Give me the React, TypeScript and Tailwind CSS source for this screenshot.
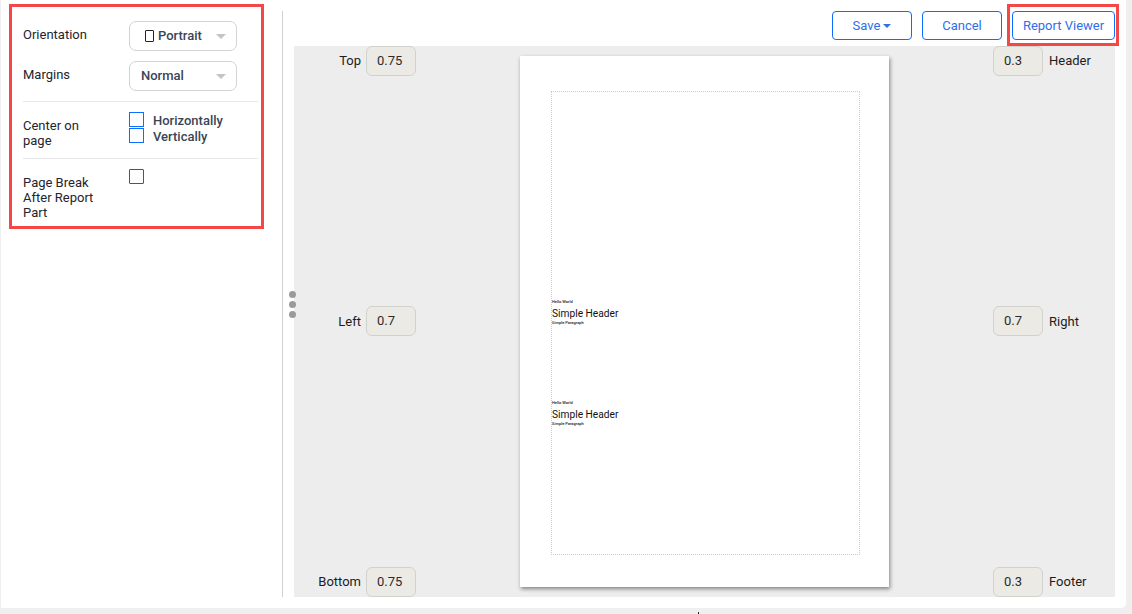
import React from "react";

const font = { fontFamily: "Roboto, 'Liberation Sans', sans-serif" };

function Caret({ className = "" }: { className?: string }) {
  return (
    <svg width="10" height="5" viewBox="0 0 10 5" className={className}>
      <path d="M0 0h10L5 5z" fill="currentColor" />
    </svg>
  );
}

function SelectBox({ children }: { children: React.ReactNode }) {
  return (
    <div className="w-[108px] h-[30px] border border-[#d4d4d4] rounded-[7px] flex items-center justify-between pr-[10px] text-[13px] font-medium text-[#3a4556] bg-white">
      {children}
      <Caret className="text-[#c4c4c4] mt-[1px]" />
    </div>
  );
}

function Check() {
  return <div className="w-[15px] h-[15px] border border-[#0d6efd] bg-white shrink-0" />;
}

function Num({ value }: { value: string }) {
  return (
    <div className="w-[50px] h-[30px] border border-[#d2d2cc] rounded-[6px] bg-[#ebeae4] flex items-center pl-[10px] text-[13px] text-[#2b2b2b] shrink-0">
      {value}
    </div>
  );
}

function MarginL({ label, value, className = "", labelClass = "" }: { label: string; value: string; className?: string; labelClass?: string }) {
  return (
    <div className={`flex items-center justify-end gap-[5px] text-[13px] text-[#1c1c1c] ${className}`}>
      <span className={labelClass}>{label}</span>
      <Num value={value} />
    </div>
  );
}

function MarginR({ label, value, className = "", labelClass = "" }: { label: string; value: string; className?: string; labelClass?: string }) {
  return (
    <div className={`flex items-center gap-[6px] text-[13px] text-[#1c1c1c] ${className}`}>
      <Num value={value} />
      <span className={labelClass}>{label}</span>
    </div>
  );
}

function Block() {
  return (
    <div className="flex flex-col text-[#222]">
      <div className="text-[4px] leading-[5px] font-medium">Hello World</div>
      <div className="text-[10.2px] leading-[14px] mt-[3px] text-[#111]">Simple Header</div>
      <div className="text-[4px] leading-[5px] font-medium -mt-[1px]">Simple Paragraph</div>
    </div>
  );
}

function Btn({ children, w }: { children: React.ReactNode; w: string }) {
  return (
    <div className={`${w} h-[29px] border border-[#0d6efd] rounded-[4px] flex items-center justify-center text-[13px] text-[#2f6fe8] bg-white shrink-0`}>
      {children}
    </div>
  );
}

export default function App() {
  return (
    <div style={font} className="relative w-[1132px] h-[614px] bg-[#efefef] overflow-hidden">
      <div className="w-[1125px] h-[608px] ml-[1px] bg-white rounded-br-[5px] flex">
        {/* Left panel */}
        <div className="w-[282px] shrink-0 pl-[8px] pt-[4px] border-r border-[#d0d0d0] [border-image:linear-gradient(to_bottom,transparent_12px,#d0d0d0_12px,#d0d0d0_596px,transparent_596px)_1]">
          <div className="w-[255px] h-[225px] border-[3px] border-[#f44848] pl-[11px] pr-[3px] text-[13px] leading-[15px] text-[#24242e]">
            <div className="flex pt-[14px]">
              <div className="w-[106px] pt-[6px]">Orientation</div>
              <SelectBox>
                <div className="flex items-center pl-[15px] gap-[4px] pb-[1px]">
                  <div className="w-[9px] h-[12px] border border-[#222] rounded-[1px]" />
                  <span>Portrait</span>
                </div>
              </SelectBox>
            </div>
            <div className="flex pt-[10px] pb-[10px] border-b border-[#e8e8e8]">
              <div className="w-[106px] pt-[6px]">Margins</div>
              <SelectBox>
                <span className="pl-[11px] pb-[1px]">Normal</span>
              </SelectBox>
            </div>
            <div className="flex h-[57px] border-b border-[#e8e8e8]">
              <div className="w-[106px] pt-[16px]">
                Center on
                <br />
                page
              </div>
              <div className="pt-[10px] flex flex-col">
                <div className="flex gap-[9px] h-[16px] font-medium text-[#3a4556]">
                  <Check />
                  <span className="leading-[16px] mt-[1px]">Horizontally</span>
                </div>
                <div className="flex gap-[9px] h-[16px] font-medium text-[#3a4556]">
                  <Check />
                  <span className="leading-[16px] mt-[1px]">Vertically</span>
                </div>
              </div>
            </div>
            <div className="flex">
              <div className="w-[106px] pt-[16px]">
                Page Break
                <br />
                After Report
                <br />
                Part
              </div>
              <div className="pt-[10px]">
                <div className="w-[15px] h-[15px] border border-[#555] rounded-[1px] bg-white" />
              </div>
            </div>
          </div>
        </div>

        {/* Right */}
        <div className="flex-1 flex flex-col pl-[11px] pr-[11px]">
          <div className="h-[46px] flex items-start justify-end pt-[11px] gap-[10px]">
            <Btn w="w-[80px]">
              <span className="flex items-center gap-[3px]">
                Save <Caret className="w-[8px] h-[4px]" />
              </span>
            </Btn>
            <Btn w="w-[80px]">Cancel</Btn>
            <Btn w="w-[103px]">Report Viewer</Btn>
          </div>
          <div className="h-[551px] bg-[#ededed] flex">
            <div className="w-[122px] shrink-0 flex flex-col">
              <MarginL label="Top" value="0.75" />
              <MarginL label="Left" value="0.7" className="mt-[230px]" labelClass="pt-[2px]" />
              <MarginL label="Bottom" value="0.75" className="mt-auto" />
            </div>
            <div className="w-[369px] h-[531px] ml-[104px] mt-[10px] bg-white shadow-[1px_2px_4px_rgba(0,0,0,0.45)] pt-[35px] px-[31px] shrink-0">
              <div className="w-[309px] h-[464px] border border-dotted border-[#cccccc] pt-[207px] flex flex-col gap-[75px]">
                <Block />
                <Block />
              </div>
            </div>
            <div className="ml-[104px] flex flex-col">
              <MarginR label="Header" value="0.3" />
              <MarginR label="Right" value="0.7" className="mt-[230px]" labelClass="pt-[2px]" />
              <MarginR label="Footer" value="0.3" className="mt-auto" />
            </div>
          </div>
        </div>
      </div>

      {/* Overlays */}
      <div className="absolute left-[1007px] top-[4px] w-[112px] h-[42px] border-[3px] border-[#f44848]" />
      <div className="absolute left-[289px] top-[291px] flex flex-col gap-[3px]">
        <div className="w-[7px] h-[7px] rounded-full bg-[#9a9a9a]" />
        <div className="w-[7px] h-[7px] rounded-full bg-[#9a9a9a]" />
        <div className="w-[7px] h-[7px] rounded-full bg-[#9a9a9a]" />
      </div>
      <div className="absolute left-[698px] top-[612px] w-[1px] h-[2px] bg-[#222]" />
    </div>
  );
}
